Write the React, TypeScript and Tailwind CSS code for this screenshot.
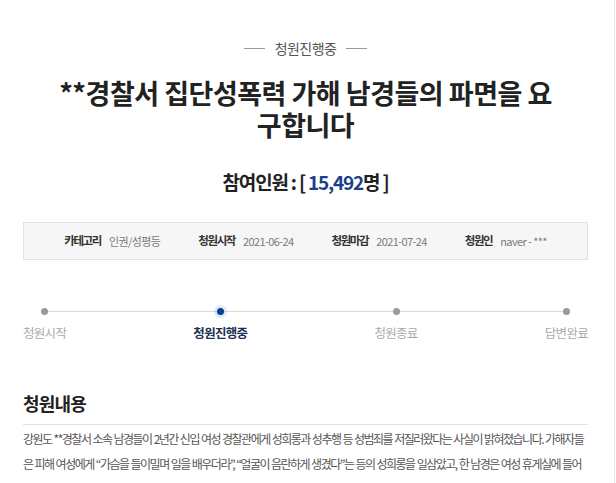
import React from 'react';

const KR = { fontFamily: '"Noto Sans CJK KR", "Noto Sans", sans-serif' };

const InfoItem = ({ label, value }: { label: string; value: string }) => (
    <div className="flex items-center gap-[8px]">
        <span className="text-[11.5px] font-bold text-[#333] tracking-[-1.4px]">{label}</span>
        <span className="text-[11px] text-[#7a7a7a] tracking-[-0.6px]">{value}</span>
    </div>
);

const steps = [
    { title: '청원시작', active: false },
    { title: '청원진행중', active: true },
    { title: '청원종료', active: false },
    { title: '답변완료', active: false },
];

export default function App() {
    return (
        <div className="w-[615px] h-[483px] overflow-hidden bg-white border-r border-[#e6e6e6]" style={KR}>
            <div className="pl-[23px] w-[588px]">
                <div className="flex items-center justify-center gap-[10px] pt-[38px]">
                    <span className="block w-[21px] h-px bg-[#999]" />
                    <span className="text-[14px] text-[#555] tracking-[-0.6px] leading-[20px]">청원진행중</span>
                    <span className="block w-[21px] h-px bg-[#999]" />
                </div>
                <h1 className="mt-[19px] text-center text-[27px] font-bold text-[#222] leading-[32px] tracking-[-0.5px] px-[30px]">
                    **경찰서 집단성폭력 가해 남경들의 파면을 요구합니다
                </h1>
                <div className="mt-[27px] text-center text-[19px] font-bold text-[#222] tracking-[-1.2px] leading-[28px]">
                    참여인원 : [ <span className="text-[#1b3f8b] font-semibold">15,492</span>명 ]
                </div>
                <div className="mt-[26px] h-[38px] bg-[#f6f6f6] border border-[#e2e2e2] flex items-center justify-center gap-[38px]">
                    <InfoItem label="카테고리" value="인권/성평등" />
                    <InfoItem label="청원시작" value="2021-06-24" />
                    <InfoItem label="청원마감" value="2021-07-24" />
                    <InfoItem label="청원인" value="naver - ***" />
                </div>
                <div className="relative mt-[47px] flex justify-between">
                    <div className="absolute left-[18px] right-[18px] top-[4px] h-px bg-[#d9d9d9]" />
                    {steps.map((s) => (
                        <div key={s.title} className="relative flex flex-col items-center">
                            {s.active ? (
                                <span className="block w-[7px] h-[7px] rounded-full bg-[#0c3f8f] shadow-[0_0_0_3px_rgba(120,170,230,0.25)] mt-px" />
                            ) : (
                                <span className="block w-[7px] h-[7px] rounded-full bg-[#9a9a9a] mt-px" />
                            )}
                            <span
                                className={
                                    s.active
                                        ? 'mt-[9px] text-[12.5px] font-bold text-[#1c2f55] tracking-[-0.7px] leading-[18px]'
                                        : 'mt-[9px] text-[12.5px] text-[#aaa] tracking-[-0.7px] leading-[18px]'
                                }
                            >
                                {s.title}
                            </span>
                        </div>
                    ))}
                </div>
                <h2 className="mt-[49px] text-[18px] font-bold text-[#222] tracking-[-0.8px] leading-[24px]">청원내용</h2>
                <div className="mt-[9px] h-px bg-[#e2e2e2]" />
                <p className="mt-[1px] text-[12px] text-[#555] leading-[25px] tracking-[-1.5px] [word-spacing:0.8px]">
                    강원도 **경찰서 소속 남경들이 2년간 신입 여성 경찰관에게 성희롱과 성추행 등 성범죄를 저질러왔다는 사실이 밝혀졌습니다. 가해자들은 피해 여성에게 “가슴을 들이밀며 일을 배우더라”, “얼굴이 음란하게 생겼다”는 등의 성희롱을 일삼았고, 한 남경은 여성 휴게실에 들어가 피해 여성의 속옷 위에 꽃을 놓아두기도 했습니다. 가해자들은 피해자의 성관계 횟수에 관한 소문을 공유하고, 이 소문을 확인하기 위해
                </p>
            </div>
        </div>
    );
}
